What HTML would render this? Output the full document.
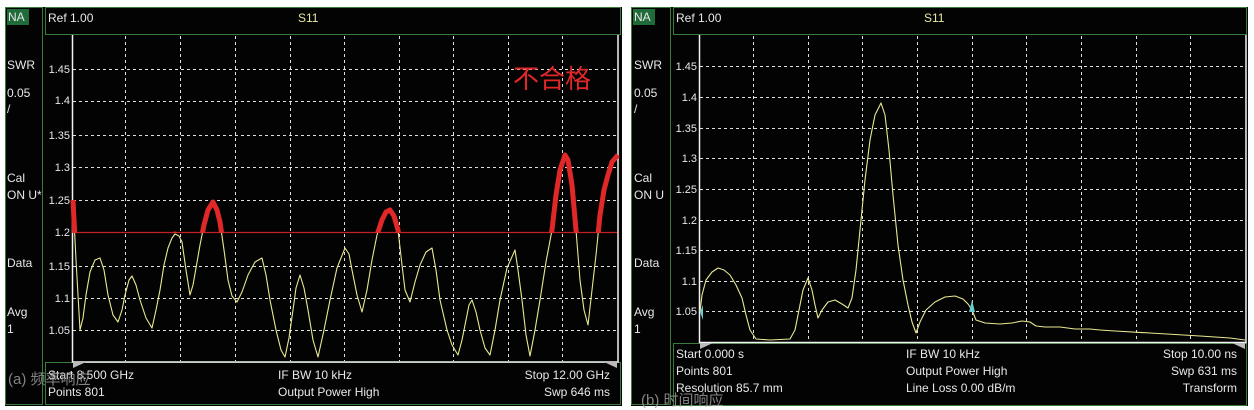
<!DOCTYPE html>
<html><head><meta charset="utf-8"><style>
html,body{margin:0;padding:0;background:#fff;width:1254px;height:410px;overflow:hidden}
svg text{font-family:"Liberation Sans","Noto Sans CJK SC",sans-serif}
</style></head><body>
<svg width="1254" height="410" viewBox="0 0 1254 410" xmlns="http://www.w3.org/2000/svg">
<defs>
<clipPath id="above"><rect x="60" y="0" width="560" height="233"/></clipPath>
</defs>
<!-- LEFT PANEL -->
<rect x="5" y="7" width="617" height="399" fill="#030303"/>
<rect x="5.5" y="7.5" width="37" height="397" fill="none" stroke="#3a7a3a"/>
<rect x="45.5" y="7.5" width="575" height="27" fill="none" stroke="#3a7a3a"/>
<rect x="45.5" y="362.5" width="575" height="42" fill="none" stroke="#3a7a3a"/>
<rect x="7" y="9" width="22" height="16" fill="#1f6b3a"/>
<g fill="#e8e8e8" font-size="12">
<text x="8" y="21">NA</text>
<text x="7" y="69">SWR</text>
<text x="7" y="97">0.05</text>
<text x="7" y="113">/</text>
<text x="7" y="182">Cal</text>
<text x="7" y="199">ON U*</text>
<text x="7" y="267">Data</text>
<text x="7" y="316">Avg</text>
<text x="7" y="333">1</text>
<text x="48" y="22">Ref 1.00</text>
<text x="298" y="22" fill="#e8e8a0">S11</text>
<text x="48" y="379">Start 8.500 GHz</text>
<text x="48" y="396">Points 801</text>
<text x="278" y="379">IF BW 10 kHz</text>
<text x="278" y="396">Output Power High</text>
<text x="610" y="379" text-anchor="end">Stop 12.00 GHz</text>
<text x="610" y="396" text-anchor="end">Swp 646 ms</text>
</g>
<g fill="#e8e8e8" font-size="11" text-anchor="end">
<text x="70" y="73">1.45</text><text x="70" y="104">1.4</text><text x="70" y="139">1.35</text>
<text x="70" y="171">1.3</text><text x="70" y="204">1.25</text><text x="70" y="236">1.2</text>
<text x="70" y="270">1.15</text><text x="70" y="302">1.1</text><text x="70" y="334">1.05</text>
</g>
<g stroke="#e0e0e0" stroke-dasharray="3,3" stroke-width="1">
<path d="M73 69.5H617M73 101.5H617M73 135.5H617M73 167.5H617M73 200.5H617M73 266.5H617M73 298.5H617M73 330.5H617"/>
<path d="M125.5 36V361M180.5 36V361M235.5 36V361M290.5 36V361M344.5 36V361M399.5 36V361M453.5 36V361M508.5 36V361M562.5 36V361"/>
</g>
<path d="M72.5 35V362H618V35" fill="none" stroke="#f2f2f2" stroke-width="1.5"/>
<line x1="73" y1="232.5" x2="617" y2="232.5" stroke="#c02020" stroke-width="1.2"/>
<polyline fill="none" stroke="#e8e890" stroke-width="1.1" stroke-linejoin="round" points="73,200 76,260 80,330 83,318 86,295 90,272 95,260 100,258 104,270 108,295 113,315 118,322 122,310 125,295 129,280 132,276 136,285 140,300 146,318 152,328 156,310 160,290 164,265 168,248 172,238 175,234 179,236 182,242 186,270 190,295 193,285 196,268 200,245 204,225 208,210 213,202 217,210 220,222 224,250 228,280 232,296 237,302 242,292 248,275 255,262 262,258 266,275 270,300 276,330 281,350 285,357 289,338 293,310 296,288 300,275 304,288 308,310 313,340 318,357 324,330 330,300 337,268 345,248 349,254 352,270 357,295 362,312 367,290 372,260 377,235 382,220 386,212 390,210 394,216 398,230 402,265 405,290 410,302 415,282 420,265 426,252 432,248 436,270 440,300 447,330 452,345 458,355 462,340 466,320 469,305 472,300 476,312 480,330 485,348 490,355 495,330 500,300 507,268 515,250 518,270 522,300 526,335 530,356 535,330 540,300 546,262 552,230 556,195 560,170 565,155 568,160 572,185 576,230 580,280 584,310 588,325 592,290 596,255 600,215 604,190 608,175 612,162 618,155"/>
<g clip-path="url(#above)">
<polyline fill="none" stroke="#e02828" stroke-width="5" stroke-linejoin="round" points="73,200 76,260 80,330 83,318 86,295 90,272 95,260 100,258 104,270 108,295 113,315 118,322 122,310 125,295 129,280 132,276 136,285 140,300 146,318 152,328 156,310 160,290 164,265 168,248 172,238 175,234 179,236 182,242 186,270 190,295 193,285 196,268 200,245 204,225 208,210 213,202 217,210 220,222 224,250 228,280 232,296 237,302 242,292 248,275 255,262 262,258 266,275 270,300 276,330 281,350 285,357 289,338 293,310 296,288 300,275 304,288 308,310 313,340 318,357 324,330 330,300 337,268 345,248 349,254 352,270 357,295 362,312 367,290 372,260 377,235 382,220 386,212 390,210 394,216 398,230 402,265 405,290 410,302 415,282 420,265 426,252 432,248 436,270 440,300 447,330 452,345 458,355 462,340 466,320 469,305 472,300 476,312 480,330 485,348 490,355 495,330 500,300 507,268 515,250 518,270 522,300 526,335 530,356 535,330 540,300 546,262 552,230 556,195 560,170 565,155 568,160 572,185 576,230 580,280 584,310 588,325 592,290 596,255 600,215 604,190 608,175 612,162 618,155"/>
</g>
<polygon points="73,362 86,362 73,368" fill="#bbb"/><polygon points="617,362 604,362 617,368" fill="#bbb"/>
<text x="513" y="88" font-size="26" fill="#e02828">不合格</text>
<text x="8" y="384" font-size="15" fill="#9a9a9a" fill-opacity="0.85">(a) 频率响应</text>

<!-- RIGHT PANEL -->
<rect x="631" y="7" width="617" height="399" fill="#030303"/>
<rect x="631.5" y="7.5" width="39" height="397" fill="none" stroke="#3a7a3a"/>
<rect x="673.5" y="7.5" width="573" height="27" fill="none" stroke="#3a7a3a"/>
<rect x="673.5" y="343.5" width="573" height="62" fill="none" stroke="#3a7a3a"/>
<rect x="633" y="9" width="22" height="16" fill="#1f6b3a"/>
<g fill="#e8e8e8" font-size="12">
<text x="634" y="21">NA</text>
<text x="634" y="69">SWR</text>
<text x="634" y="97">0.05</text>
<text x="634" y="113">/</text>
<text x="634" y="182">Cal</text>
<text x="634" y="199">ON U</text>
<text x="634" y="267">Data</text>
<text x="634" y="316">Avg</text>
<text x="634" y="333">1</text>
<text x="676" y="22">Ref 1.00</text>
<text x="924" y="22" fill="#e8e8a0">S11</text>
<text x="676" y="358">Start 0.000 s</text>
<text x="676" y="375">Points 801</text>
<text x="676" y="392">Resolution 85.7 mm</text>
<text x="906" y="358">IF BW 10 kHz</text>
<text x="906" y="375">Output Power High</text>
<text x="906" y="392">Line Loss 0.00  dB/m</text>
<text x="1237" y="358" text-anchor="end">Stop 10.00 ns</text>
<text x="1237" y="375" text-anchor="end">Swp 631 ms</text>
<text x="1237" y="392" text-anchor="end">Transform</text>
</g>
<g fill="#e8e8e8" font-size="11" text-anchor="end">
<text x="697" y="70">1.45</text><text x="697" y="101">1.4</text><text x="697" y="132">1.35</text>
<text x="697" y="162">1.3</text><text x="697" y="193">1.25</text><text x="697" y="224">1.2</text>
<text x="697" y="254">1.15</text><text x="697" y="285">1.1</text><text x="697" y="315">1.05</text>
</g>
<g stroke="#e0e0e0" stroke-dasharray="3,3" stroke-width="1">
<path d="M700 66.5H1245M700 97.5H1245M700 128.5H1245M700 158.5H1245M700 189.5H1245M700 220.5H1245M700 250.5H1245M700 281.5H1245M700 311.5H1245"/>
<path d="M753.5 36V342M808.5 36V342M862.5 36V342M917.5 36V342M972.5 36V342M1026.5 36V342M1081.5 36V342M1136.5 36V342M1190.5 36V342"/>
</g>
<path d="M699.5 35V342.5H1246V35" fill="none" stroke="#f2f2f2" stroke-width="1.5"/>
<polyline fill="none" stroke="#e8e890" stroke-width="1.1" stroke-linejoin="round" points="700,312 702,295 706,280 712,272 718,268 724,270 730,275 736,285 742,298 746,315 750,330 756,339 770,340 790,339 795,330 799,310 803,290 808,278 812,290 815,305 818,318 822,310 828,302 835,300 842,304 848,308 852,298 856,270 860,230 865,180 870,140 875,115 881,103 885,115 889,150 893,195 898,245 903,280 908,305 912,322 916,333 920,322 926,310 935,302 945,297 955,296 963,299 968,304 972,310 976,320 985,323 1000,324 1012,323 1022,321 1030,322 1036,326 1045,327 1060,327 1075,329 1090,329 1100,330 1115,331 1150,333 1200,336 1230,338 1245,340"/>
<polygon points="700,312 703,305 703,320" fill="#6cc"/><polygon points="972,300 969,312 975,312" fill="#6cc"/>
<polygon points="700,343 713,343 700,349" fill="#bbb"/><polygon points="1245,343 1232,343 1245,349" fill="#bbb"/>
<text x="641" y="405" font-size="15" fill="#9a9a9a" fill-opacity="0.85">(b) 时间响应</text>
</svg>
</body></html>
